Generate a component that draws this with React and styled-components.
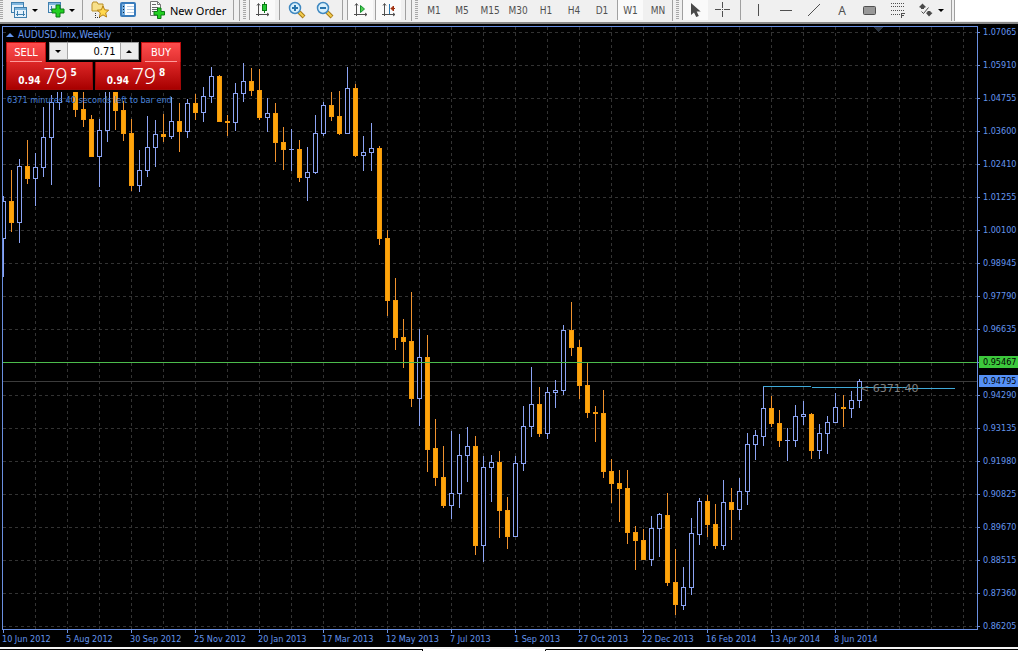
import { useState } from "react";
import styled, { createGlobalStyle, css } from "styled-components";

const GlobalStyle = createGlobalStyle`
  * {
    box-sizing: border-box;
  }

  body {
    margin: 0;
    background: #000;
    font-family: "DejaVu Sans Condensed", "DejaVu Sans", sans-serif;
  }

  button, input {
    font: inherit;
    margin: 0;
    padding: 0;
    border: 0;
    border-radius: 0;
  }
`;

const Terminal = styled.div`
  display: flex;
  flex-direction: column;
  min-height: 100vh;
  overflow: hidden;
`;

/* ---------- toolbar ---------- */

const Toolbar = styled.header`
  display: flex;
  height: 24px;
  background: #f0f0f0;
  border-bottom: 2px solid #8a8a8a;
`;

const ToolGroup = styled.div`
  display: flex;
  flex: none;
  height: 21px;
  padding-left: ${(props) => (props.$first ? 0 : 3)}px;
  padding-right: ${(props) => (props.$tight ? 0 : 2)}px;
  border-right: 1px solid #a0a0a0;
`;

const Grip = styled.span`
  width: 3px;
  height: 19px;
  margin-right: 2px;
  background: repeating-linear-gradient(#a8a8a8 0 1px, #f0f0f0 1px 2px);
`;

const Separator = styled.span`
  width: 1px;
  height: 20px;
  margin: 0 3px;
  background: #a0a0a0;
`;

const Tool = styled.button`
  display: flex;
  align-items: center;
  justify-content: center;
  gap: 4px;
  flex: none;
  width: ${(props) => (props.$wide ? 37 : 28)}px;
  height: 20px;
  color: #505050;
  background: transparent;
  font-size: 10px;

  ${(props) =>
    props.$active &&
    css`
      width: 26px;
      margin: 0 1px;
      background: #fafafa;
      border-left: 1px solid #a0a0a0;
    `}
`;

const OrderTool = styled(Tool)`
  justify-content: flex-start;
  gap: 5px;
  width: 88px;
  padding-left: 7px;
  color: #000;
  font-family: "Noto Sans", "Open Sans", sans-serif;
  font-size: 11px;
  white-space: nowrap;
`;

const Caret = styled.span`
  border: 3px solid transparent;
  border-top-color: #000;
  border-bottom: 0;
`;

const SidePane = styled.div`
  flex: 1;
  height: 21px;
  margin-left: 2px;
  background: #fff;
  border-left: 1px solid #a0a0a0;
`;

/* ---------- chart ---------- */

const ChartWindow = styled.main`
  position: relative;
  display: grid;
  grid-template-columns: 1fr 40px;
  grid-template-rows: 1fr 17px;
  flex: 1;
  padding: 2px 0 0 2px;
  color: #6496ee;
  background: #000;
  font-size: 9px;
`;

const Plot = styled.svg`
  display: block;
  width: 100%;
  height: 100%;
  min-width: 0;
  border: 1px solid #6a8fe0;
  shape-rendering: crispEdges;
`;

const PriceScale = styled.div`
  position: relative;
  display: flex;
  flex-direction: column;
  gap: 21px;
  height: 0;
`;

const PriceLabel = styled.div`
  display: flex;
  align-items: center;
  flex: none;
  gap: 3px;
  height: 12px;
  line-height: 12px;

  &::before {
    content: "";
    width: 2px;
    height: 1px;
    background: #6a8fe0;
  }
`;

const PriceTag = styled.div`
  position: absolute;
  top: ${(props) => props.$top}px;
  left: 1px;
  right: 0;
  height: 12px;
  padding-left: 4px;
  line-height: 12px;
  color: #000;
  background: ${(props) => props.$color};
`;

const TimeScale = styled.div`
  display: flex;
  grid-column: 1 / -1;
  overflow: hidden;
`;

const TimeLabel = styled.div`
  flex: none;
  width: 64px;
  line-height: 13px;
  white-space: nowrap;

  &::before {
    content: "";
    display: block;
    width: 1px;
    height: 3px;
    margin-left: 1px;
    background: #6a8fe0;
  }
`;

const ChartTitle = styled.div`
  position: absolute;
  top: 4px;
  left: 6px;
  display: flex;
  align-items: center;
  gap: 4px;
  line-height: 13px;
  font-size: 10px;
  background: #000;
`;

const TitleMark = styled.span`
  border: 4px solid transparent;
  border-top: 0;
  border-bottom-color: #6496ee;
`;

/* ---------- one click trading ---------- */

const TradePanel = styled.section`
  position: absolute;
  top: 18px;
  left: 4px;
  width: 179px;
  padding: 0 2px 2px;
  background: #000;
`;

const TradeRow = styled.div`
  display: flex;
  justify-content: space-between;
`;

const SideButton = styled.button`
  width: 40px;
  height: 20px;
  color: #fff;
  font-size: 11px;
  background:
    linear-gradient(#ff9a9a, #ff9a9a) center bottom / 32px 1px no-repeat,
    linear-gradient(#ff4c4c, #e03030);
  border: 1px solid #c01010;
  border-bottom: 0;
`;

const Volume = styled.div`
  display: flex;
  height: 18px;
  background: #fff;
  border: 1px solid #9a9a9a;
`;

const VolumeInput = styled.input`
  width: 54px;
  padding-right: 4px;
  color: #000;
  font-size: 11px;
  text-align: right;
  border: solid #a8a8a8;
  border-width: 0 1px;
  outline: 0;
`;

const StepButton = styled.button`
  display: grid;
  place-items: center;
  width: 17px;
  background: #ececec;

  &::before {
    content: "";
    border: 3px solid transparent;
    ${(props) =>
      props.$up
        ? "border-top: 0; border-bottom-color: #000;"
        : "border-bottom: 0; border-top-color: #000;"}
  }
`;

const PriceButton = styled.button`
  display: flex;
  align-items: flex-end;
  justify-content: center;
  gap: 3px;
  width: ${(props) => (props.$side === "sell" ? 87 : 86)}px;
  height: 28px;
  padding: 0 4px 2px 0;
  color: #fff;
  background: linear-gradient(#dd2727, #a80000);
  border: 1px solid #a00808;
  border-top: 0;
`;

const Handle = styled.span`
  font-size: 10px;
  font-weight: bold;
  line-height: 13px;
`;

const Pips = styled.span`
  font-family: "Noto Sans", "Open Sans", sans-serif;
  font-size: 21px;
  font-weight: 300;
  line-height: 22px;
`;

const Point = styled.span`
  align-self: flex-start;
  padding-top: 4px;
  font-size: 10px;
  font-weight: bold;
  line-height: 13px;
`;

/* ---------- bottom tabs ---------- */

const TabStrip = styled.footer`
  display: flex;
  height: 4px;
  padding-top: 2px;
  background: #f4f4f4;
`;

const TabSlot = styled.div`
  flex: ${(props) => props.$flex};
  background: #fff;
  border-top: 1px solid ${(props) => (props.$open ? "#fff" : "#000")};
  border-right: ${(props) => (props.$edge ? "1px solid #000" : "0")};
`;

const periods = ["M1", "M5", "M15", "M30", "H1", "H4", "D1", "W1", "MN"];

const prices = [
  "1.07065", "1.05910", "1.04755", "1.03600", "1.02410", "1.01255", "1.00100",
  "0.98945", "0.97790", "0.96635", "0.95480", "0.94290", "0.93135", "0.91980",
  "0.90825", "0.89670", "0.88515", "0.87360", "0.86205",
];

const dates = [
  "10 Jun 2012", "5 Aug 2012", "30 Sep 2012", "25 Nov 2012", "20 Jan 2013",
  "17 Mar 2013", "12 May 2013", "7 Jul 2013", "1 Sep 2013", "27 Oct 2013",
  "22 Dec 2013", "16 Feb 2014", "13 Apr 2014", "8 Jun 2014",
];

// [high, body top, body bottom, low, rising], one bar per week
const bars = [
  [196, 201, 239, 277, 1], [170, 201, 223, 232, 0], [159, 166, 223, 243, 1],
  [140, 166, 179, 184, 0], [153, 167, 179, 206, 1], [107, 137, 168, 177, 1],
  [95, 102, 138, 185, 1], [70, 80, 103, 110, 1], [60, 70, 82, 90, 1],
  [66, 74, 110, 117, 0], [88, 109, 120, 127, 0], [115, 119, 157, 157, 0],
  [119, 130, 157, 187, 1], [72, 84, 131, 142, 1], [70, 84, 111, 130, 0],
  [101, 110, 134, 141, 0], [119, 133, 186, 191, 0], [150, 170, 186, 192, 1],
  [116, 147, 171, 177, 1], [120, 134, 148, 167, 1], [114, 134, 137, 142, 0],
  [97, 121, 137, 139, 1], [103, 121, 132, 152, 0], [99, 103, 132, 138, 1],
  [94, 103, 113, 120, 0], [87, 96, 113, 122, 1], [67, 76, 97, 103, 1],
  [75, 76, 122, 122, 0], [115, 121, 123, 136, 0], [83, 93, 123, 131, 1],
  [63, 81, 94, 102, 1], [68, 81, 91, 96, 0], [69, 90, 118, 120, 0],
  [98, 113, 118, 132, 1], [103, 113, 143, 162, 0], [127, 142, 150, 170, 0],
  [129, 149, 150, 171, 1], [140, 149, 178, 182, 0], [147, 172, 178, 201, 1],
  [115, 133, 173, 174, 1], [102, 105, 134, 136, 1], [92, 105, 117, 121, 0],
  [91, 116, 134, 135, 0], [67, 88, 134, 134, 1], [84, 88, 156, 157, 0],
  [136, 152, 156, 171, 1], [123, 148, 153, 171, 1], [146, 148, 239, 245, 0],
  [230, 238, 301, 316, 0], [278, 300, 338, 350, 0], [319, 337, 342, 368, 0],
  [292, 341, 399, 407, 0], [329, 357, 399, 426, 1], [335, 357, 450, 472, 0],
  [419, 448, 478, 486, 0], [446, 477, 506, 508, 0], [431, 493, 506, 519, 1],
  [434, 455, 494, 508, 1], [427, 446, 456, 482, 1], [436, 446, 546, 555, 0],
  [456, 467, 546, 562, 1], [455, 462, 468, 502, 1], [451, 462, 511, 538, 0],
  [497, 510, 537, 549, 0], [456, 463, 537, 537, 1], [406, 426, 464, 471, 1],
  [367, 404, 427, 437, 1], [387, 404, 434, 437, 0], [387, 392, 434, 439, 1],
  [380, 390, 393, 408, 1], [325, 330, 391, 395, 1], [302, 330, 348, 356, 0],
  [340, 347, 386, 399, 0], [363, 385, 413, 418, 0], [406, 412, 414, 442, 0],
  [390, 413, 472, 478, 0], [459, 471, 484, 503, 0], [470, 483, 489, 522, 0],
  [470, 488, 533, 544, 0], [526, 532, 541, 570, 0], [529, 540, 560, 560, 0],
  [516, 528, 560, 566, 1], [513, 514, 529, 557, 1], [493, 515, 583, 586, 0],
  [549, 582, 605, 615, 0], [567, 587, 606, 610, 1], [518, 533, 588, 595, 1],
  [498, 501, 535, 545, 1], [495, 501, 525, 537, 0], [504, 524, 546, 549, 0],
  [480, 502, 546, 550, 1], [488, 502, 510, 540, 0], [478, 491, 510, 520, 1],
  [433, 444, 492, 505, 1], [430, 435, 445, 460, 1], [386, 408, 437, 446, 1],
  [396, 408, 424, 427, 0], [410, 423, 441, 447, 0], [428, 440, 441, 461, 1],
  [405, 416, 441, 447, 1], [401, 414, 417, 425, 1], [413, 414, 451, 459, 0],
  [424, 433, 451, 459, 1], [416, 422, 434, 454, 1], [393, 407, 423, 423, 1],
  [395, 407, 409, 427, 0], [391, 400, 409, 418, 1], [379, 381, 401, 408, 1],
];

const BAR_STEP = 8;
const TOP = 27;

const Candle = ({ index, bar }) => {
  const [high, top, bottom, low, rising] = bar;
  const x = index * BAR_STEP;
  const stroke = rising ? "#8ca4f4" : "#f0922e";
  const height = bottom - top;

  return (
    <g>
      <rect x={x} y={high - TOP} width="1" height={low - high} fill={stroke} />
      <rect
        x={x - 2}
        y={top - TOP}
        width="5"
        height={height}
        fill={rising ? stroke : "#f59a0c"}
      />
      {height > 2 && (
        <rect
          x={x - 1}
          y={top - TOP + 1}
          width="3"
          height={height - 2}
          fill={rising ? "#000" : "#ffa50a"}
        />
      )}
    </g>
  );
};

const PriceChart = () => (
  <Plot role="img" aria-label="AUDUSD weekly candlestick chart">
    {prices.map((price, i) => (
      <line
        key={price}
        x1="0"
        x2="100%"
        y1={i * 33 + 5.5}
        y2={i * 33 + 5.5}
        stroke="#333"
        strokeDasharray="3 3"
      />
    ))}
    {Array.from({ length: 30 }, (_, i) => (
      <line
        key={i}
        x1={i * 32 + 32.5}
        x2={i * 32 + 32.5}
        y1="0"
        y2="100%"
        stroke="#333"
        strokeDasharray="3 3"
      />
    ))}
    <path d="M870 0h10l-5 5z" fill="#2c3440" />
    <rect y="354" width="100%" height="1" fill="#3c3c3c" />
    {bars.map((bar, i) => (
      <Candle key={i} index={i} bar={bar} />
    ))}
    <rect y="335" width="100%" height="1" fill="#4cbc4c" />
    <line x1="760" y1="359.5" x2="952" y2="361.5" stroke="#3fa9d8" />
    <text x="857" y="365" fill="#808080" fontSize="11" fontFamily="DejaVu Sans, sans-serif">
      {"< 6371:40"}
    </text>
    <text x="4" y="76" fill="#4a84dc" fontSize="9">
      6371 minutes 40 seconds left to bar end
    </text>
  </Plot>
);

/* ---------- icons ---------- */

const Plus = ({ x, y }) => (
  <path
    d={`M${x + 4} ${y}h4v4h4v4h-4v4h-4v-4h-4v-4h4z`}
    fill="#22d022"
    stroke="#0a7a14"
  />
);

const ProfilesIcon = () => (
  <svg width="18" height="18">
    <rect x="1.5" y="1.5" width="12" height="10" fill="#e4f1fb" stroke="#3f7fae" />
    <path d="M2 2h11v2H2z" fill="#7fb6de" />
    <rect x="4.5" y="6.5" width="12" height="10" fill="#e4f1fb" stroke="#3f7fae" />
    <path d="M5 7h11v2H5z" fill="#7fb6de" />
    <path d="M7.500 10v5M13.500 10v5M6 13.500h9" stroke="#3f7fae" fill="none" />
  </svg>
);

const NewChartIcon = () => (
  <svg width="18" height="18">
    <rect x="1.5" y="1.5" width="12" height="10" fill="#e4f1fb" stroke="#3f7fae" />
    <path d="M2 2h11v2H2z" fill="#7fb6de" />
    <path d="M4.500 5v5M3 8.500h7" stroke="#3f7fae" />
    <Plus x={5} y={4} />
  </svg>
);

const FavoritesIcon = () => (
  <svg width="18" height="18">
    <path d="M1 3l1-2h4l1 2h5v7H1z" fill="#f8e08a" stroke="#b98f28" />
    <path d="M4.500 12v5M4 16.500h5" stroke="#333" strokeDasharray="1 1" />
    <path
      d="M12 5l1.700 3.800 4 .4-3 2.700.9 4.100-3.600-2.100L8.400 16l.9-4.100-3-2.700 4-.4z"
      fill="#ffd84d"
      stroke="#b58018"
    />
  </svg>
);

const WindowIcon = () => (
  <svg width="16" height="16">
    <rect x="1" y="1" width="14" height="13" rx="1" fill="#fff" stroke="#3a7cbc" strokeWidth="2" />
    <path d="M2 2h3v11H2z" fill="#76aee0" />
    <path d="M3.500 4v8" stroke="#123" strokeDasharray="1 2" />
    <path d="M7 4.500h7M7 7.500h7M7 10.500h7" stroke="#b8cde4" />
  </svg>
);

const OrderIcon = () => (
  <svg width="16" height="18">
    <path d="M1.500 .5h7l3 3v11h-10z" fill="#fafafa" stroke="#777" />
    <path d="M3 3.500h4M3 6.500h6M3 8.500h6M3 10.500h4" stroke="#666" />
    <path d="M8.500 .5v3h3" fill="none" stroke="#777" />
    <path d="M8.500 7h3.500v3.500h3.500v3.500H12v3.500H8.500V14H5v-3.500h3.500z" fill="#22d022" stroke="#0a7a14" />
  </svg>
);

const axes = "M3.500 15V3M1 13.500h13M2 4.500l1.500-2 1.500 2M12 12l2 1.500-2 1.500";

const CandlesIcon = () => (
  <svg width="16" height="18">
    <path d={axes} fill="none" stroke="#505050" />
    <path d="M9.500 1v11" stroke="#0a7a14" />
    <rect x="7.500" y="3.500" width="4" height="6" fill="#22c832" stroke="#0a7a14" />
  </svg>
);

const ScrollIcon = () => (
  <svg width="16" height="18">
    <path d={axes} fill="none" stroke="#505050" />
    <path d="M7.500 4.500l4 3.500-4 3.500z" fill="#4ed04e" stroke="#149030" />
  </svg>
);

const ShiftIcon = () => (
  <svg width="16" height="18">
    <path d={axes} fill="none" stroke="#505050" />
    <path d="M8.500 3v10" stroke="#2878b0" />
    <path d="M14 7.500H10M12.500 5L10 7.500l2.500 2.500z" fill="#b04018" stroke="#a03010" />
  </svg>
);

const LensIcon = ({ plus }) => (
  <svg width="18" height="18">
    <path d="M11 11l5 5" stroke="#a87a18" strokeWidth="4" />
    <path d="M11 11l4.500 4.500" stroke="#f4cf50" strokeWidth="2" />
    <circle cx="7" cy="7" r="5.500" fill="#d8f0fc" stroke="#3f88c0" strokeWidth="1.500" />
    <path d={plus ? "M4 7h6M7 4v6" : "M4 7h6"} stroke="#2874ac" strokeWidth="2" />
  </svg>
);

const CursorIcon = () => (
  <svg width="14" height="16">
    <path d="M2 1v12l3-2.600L7.200 15l2.600-1.100-2.100-4.500h4z" fill="#4a4a4a" />
  </svg>
);

const CrosshairIcon = () => (
  <svg width="16" height="16">
    <path d="M7.500 0v6M7.500 9v6M0 7.500h6M9 7.500h6" stroke="#505050" />
    <path d="M7 7h1v1H7z" fill="#505050" />
  </svg>
);

const ObjectIcon = ({ d }) => (
  <svg width="14" height="14">
    <path d={d} stroke="#505050" fill="none" />
  </svg>
);

const RectangleIcon = () => (
  <svg width="14" height="12">
    <rect x=".5" y="2.500" width="12" height="8" rx="1" fill="#989898" stroke="#505050" />
  </svg>
);

const FiboIcon = () => (
  <svg width="16" height="18">
    <path d="M1 2.500h14M1 5.500h14M1 9.500h14M1 13.500h9" stroke="#505050" strokeDasharray="1 1" />
    <path d="M11.500 17v-5M11 12.500h4M11 14.500h3" stroke="#505050" fill="none" />
  </svg>
);

const ArrowsIcon = () => (
  <svg width="16" height="16">
    <path d="M1 5l3.500-3.500L8 5 6 6v1H3V6zM8 11l1.500-1V9h3v1l2 1-3.500 3.500z" fill="#4a4a4a" />
    <path d="M3.500 9.500l2 2 5-6" stroke="#4a4a4a" fill="none" />
  </svg>
);

const TextIcon = styled.span`
  font-family: "Noto Sans", "Open Sans", sans-serif;
  font-size: 12px;
`;

const MainToolbar = () => {
  const [period, setPeriod] = useState("W1");

  return (
    <Toolbar>
      <ToolGroup $first>
        <Grip />
        <Tool $wide aria-label="Profiles">
          <ProfilesIcon />
          <Caret />
        </Tool>
        <Tool $wide aria-label="New chart">
          <NewChartIcon />
          <Caret />
        </Tool>
        <Separator />
        <Tool aria-label="Favorites"><FavoritesIcon /></Tool>
        <Tool aria-label="Data window"><WindowIcon /></Tool>
        <OrderTool>
          <OrderIcon />
          New Order
        </OrderTool>
        <Separator />
      </ToolGroup>
      <ToolGroup>
        <Grip />
        <Tool $active aria-label="Candlesticks"><CandlesIcon /></Tool>
        <Separator />
        <Tool aria-label="Zoom in"><LensIcon plus /></Tool>
        <Tool aria-label="Zoom out"><LensIcon /></Tool>
        <Separator />
        <Tool $active aria-label="Auto scroll"><ScrollIcon /></Tool>
        <Tool $active aria-label="Chart shift"><ShiftIcon /></Tool>
        <Separator />
      </ToolGroup>
      <ToolGroup $tight>
        <Grip />
        {periods.map((item) => (
          <Tool key={item} $active={item === period} onClick={() => setPeriod(item)}>
            {item}
          </Tool>
        ))}
      </ToolGroup>
      <ToolGroup>
        <Grip />
        <Tool $active aria-label="Cursor"><CursorIcon /></Tool>
        <Tool aria-label="Crosshair"><CrosshairIcon /></Tool>
        <Separator />
        <Tool aria-label="Vertical line"><ObjectIcon d="M7.500 1v12" /></Tool>
        <Tool aria-label="Horizontal line"><ObjectIcon d="M1 7.500h12" /></Tool>
        <Tool aria-label="Trendline"><ObjectIcon d="M1 13L13 1" /></Tool>
        <Tool aria-label="Text"><TextIcon>A</TextIcon></Tool>
        <Tool aria-label="Rectangle"><RectangleIcon /></Tool>
        <Tool aria-label="Fibonacci"><FiboIcon /></Tool>
        <Tool $wide aria-label="Arrows">
          <ArrowsIcon />
          <Caret />
        </Tool>
      </ToolGroup>
      <SidePane />
    </Toolbar>
  );
};

const OneClickTrading = () => {
  const [volume, setVolume] = useState("0.71");
  const step = (delta) =>
    setVolume((value) => Math.max(0.01, Number(value) + delta).toFixed(2));

  return (
    <TradePanel>
      <TradeRow>
        <SideButton>SELL</SideButton>
        <Volume>
          <StepButton aria-label="Decrease volume" onClick={() => step(-0.01)} />
          <VolumeInput
            aria-label="Volume"
            value={volume}
            onChange={(e) => setVolume(e.target.value)}
          />
          <StepButton $up aria-label="Increase volume" onClick={() => step(0.01)} />
        </Volume>
        <SideButton>BUY</SideButton>
      </TradeRow>
      <TradeRow>
        <PriceButton $side="sell">
          <Handle>0.94</Handle>
          <Pips>79</Pips>
          <Point>5</Point>
        </PriceButton>
        <PriceButton $side="buy">
          <Handle>0.94</Handle>
          <Pips>79</Pips>
          <Point>8</Point>
        </PriceButton>
      </TradeRow>
    </TradePanel>
  );
};

const App = () => {
  return (
    <Terminal>
      <GlobalStyle />
      <MainToolbar />
      <ChartWindow>
        <PriceChart />
        <PriceScale>
          {prices.map((price) => (
            <PriceLabel key={price}>{price}</PriceLabel>
          ))}
          <PriceTag $top={330} $color="#3cc83c">0.95467</PriceTag>
          <PriceTag $top={349} $color="#5590f5">0.94795</PriceTag>
        </PriceScale>
        <TimeScale>
          {dates.map((date) => (
            <TimeLabel key={date}>{date}</TimeLabel>
          ))}
        </TimeScale>
        <ChartTitle>
          <TitleMark />
          AUDUSD.lmx,Weekly
        </ChartTitle>
        <OneClickTrading />
      </ChartWindow>
      <TabStrip>
        <TabSlot $flex="0 0 423px" $edge />
        <TabSlot $flex="0 0 123px" $open $edge />
        <TabSlot $flex="1" />
      </TabStrip>
    </Terminal>
  );
};

export default App;
